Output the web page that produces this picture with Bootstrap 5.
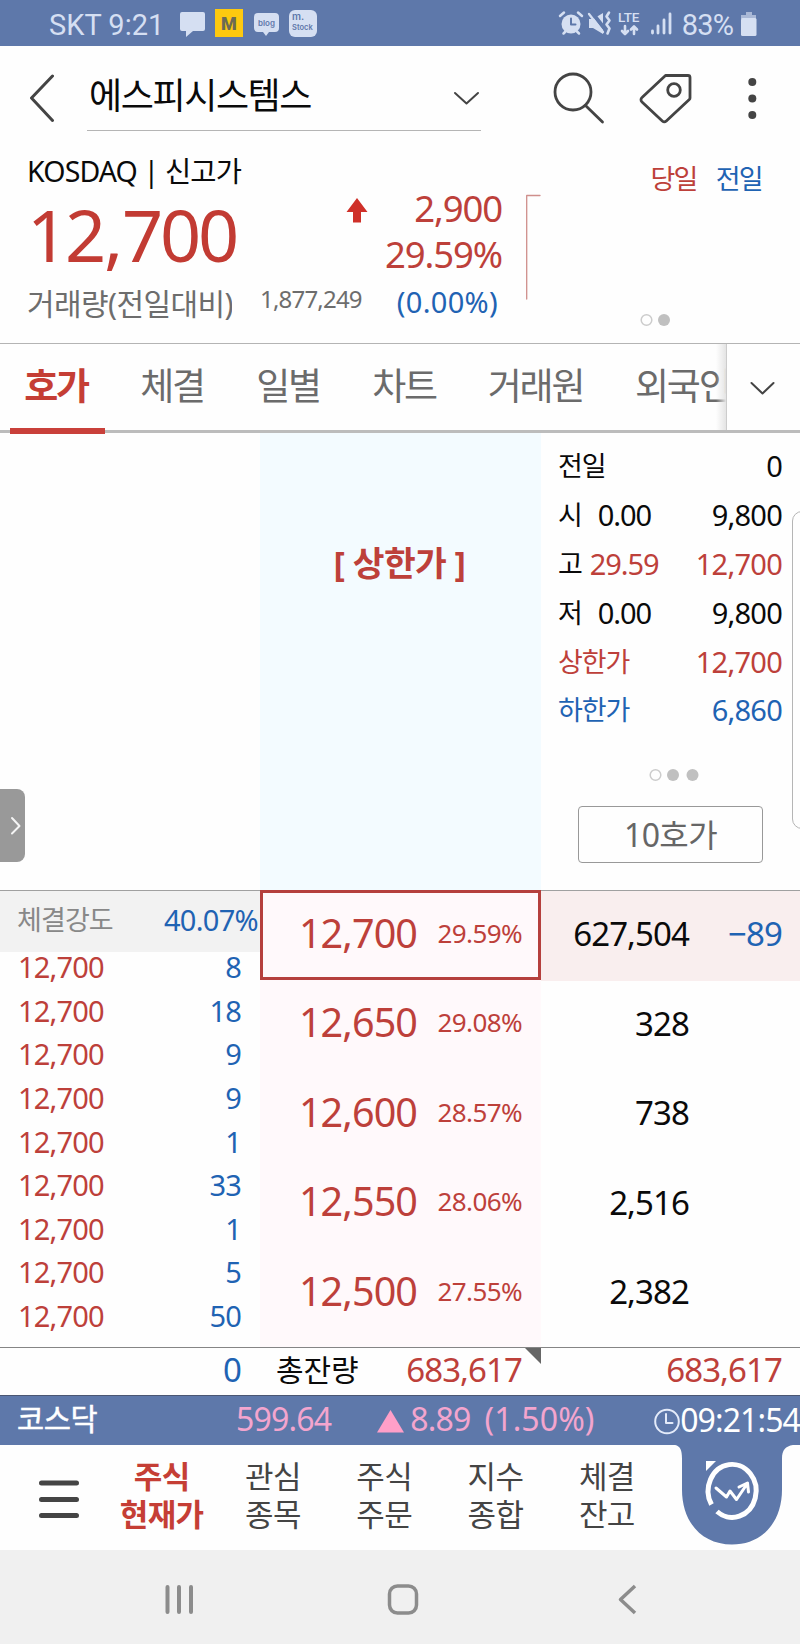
<!DOCTYPE html>
<html lang="ko">
<head>
<meta charset="utf-8">
<meta name="viewport" content="width=device-width, initial-scale=1">
<title>에스피시스템스 호가</title>
<link href="https://cdn.jsdelivr.net/npm/bootstrap@5.3.0/dist/css/bootstrap.min.css" rel="stylesheet">
<style>
:root{--up:#bd403a;--down:#1f63b3;--bar:#5e78aa}
body{font-family:"Noto Sans","Noto Sans CJK KR",sans-serif;color:#0a0a0a;background:#fefefe;width:800px;height:1644px;overflow:hidden;white-space:nowrap;line-height:1}
svg{display:block;flex:none;fill:none;stroke-linecap:round;stroke-linejoin:round}
.up{color:var(--up)}.down{color:var(--down)}
.status{height:46px;background:var(--bar);color:#d5dff2;font-family:Roboto,sans-serif;font-size:29px;line-height:50px}
.head{height:94px}
.pick{width:394px;height:85px;margin-left:33px;border-bottom:1px solid #b5b5b5}
.pick span{font-size:36px;letter-spacing:-1.4px;margin-left:2px;line-height:100px}
.info{height:203px}
.info-l{width:370px;padding-left:27px}
.market{font-size:28.5px;letter-spacing:-.85px;line-height:62px;height:62px}
.price{font-size:72px;letter-spacing:-3.2px;line-height:64px;height:70px}
.price span{padding:0 2px 0 1px}
.vol{height:64px;line-height:64px;color:#6d6d6d}
.vol-n{width:205px;overflow:hidden;font-size:30px;letter-spacing:-.6px}
.vol-v{font-size:24px;letter-spacing:-.8px;margin-left:28px;line-height:54px}
.info-m{width:133px;padding:45px 1px 0 0}
.info-m div{font-size:36.5px;line-height:46px;height:46px;letter-spacing:-1.1px}
.info-m .small-pct{font-size:29px;line-height:49px;letter-spacing:.3px}
.mini{width:15px;height:106px;margin:54px 0 0 23px}
.info-r{width:259px;padding:23px 38px 0 0}
.info-r .lg{font-size:27px;line-height:32px;letter-spacing:-1.7px}
.tabs{height:90px;border-top:1px solid #b4b4b4;border-bottom:3px solid #bcbcbc}
.tabs .t{font-size:37px;letter-spacing:-2.2px;line-height:84px;height:90px;color:#6b6b6b;text-align:center;width:116px;padding-right:4px;flex:none}
.tabs .on{color:#c53e35;font-weight:700;position:relative}
.tabs .on::after{content:"";position:absolute;left:10px;width:95px;bottom:0;height:6px;background:#c9403a}
.strip{width:726px;overflow:hidden;height:90px;position:relative}
.strip::after{content:"";position:absolute;right:0;top:0;width:10px;height:86px;background:linear-gradient(90deg,#fff0,#e4e4e4)}
.more{width:74px;height:86px;border-left:1px solid #ccc;background:#fefefe}
.upper{height:457px;position:relative}
.c1{width:260px}.c2{width:281px}.c3{width:259px}
.c1,.c2,.c3{flex:none}
.limit{background:#f3fbff;font-size:34.5px;font-weight:700;letter-spacing:-.6px;line-height:260px;text-align:center;padding-right:2px}
.stat{padding:9px 18px 0 17px}
.stat .r{height:48.9px;line-height:48.9px;font-size:29px;letter-spacing:-.75px}
.stat .k{font-size:27px;letter-spacing:-1.1px}
.stat .v{width:68px;text-align:left;letter-spacing:-1.1px}
.btn10{width:185px;height:57px;border:1px solid #999;border-radius:4px;font-size:32px;line-height:50px;letter-spacing:-.6px;color:#666;text-align:center;margin:8px 0 0 20px;padding:0}
.handle{position:absolute;left:0;top:356px;width:25px;height:73px;border-radius:0 8px 8px 0;background:#999}
.peek{position:absolute;left:792px;top:78px;width:20px;height:318px;border:1px solid #b5b5b5;border-radius:11px;background:#fefefe}
.book{height:457px;border-top:1px solid #a0a0a0}
.power{height:61px;background:#f2f2f2;padding:0 2px 0 17px;line-height:58px;font-size:29px;letter-spacing:-.7px}
.power .n{font-size:27px;letter-spacing:-.9px;color:#888}
.ticks{margin-top:-6px}
.ticks div{height:43.65px;line-height:41px;padding:0 19px 0 18px;font-size:29px;letter-spacing:-.8px}
.ask{background:#fff9fb}
.ask .r,.qty .r{height:89.6px;line-height:85px}
.ask .r{padding:0 19px 0 0}
.ask .p{font-size:39.5px;letter-spacing:-.9px;margin-right:20.5px}
.ask .q{font-size:26px;letter-spacing:-.6px}
.ask .r:first-child{border:3px solid #b5403d;line-height:81px;height:90px;padding-right:16px;margin-top:-1px}
.qty .r{font-size:33px;letter-spacing:-.9px}
.qty .r:first-child{background:#f9eeee}
.qty .a{width:148px;text-align:right}.qty .b{width:93px;text-align:right}
.sum{height:49px;border-top:1px solid #858585;border-bottom:1px solid #4a5672;line-height:43px;font-size:33px;letter-spacing:-.9px}
.corner{position:absolute;right:0;top:0;width:16px;height:16px;background:#666;clip-path:polygon(0 0,100% 0,100% 100%)}
.index{height:49px;background:var(--bar);color:#f3a5ce;font-size:32px;line-height:45px;letter-spacing:-.8px}
.index .nm{color:#fff;font-size:29.5px;width:218px;padding-left:17px;letter-spacing:-.4px;-webkit-text-stroke:.5px}
.dock{height:105px}
.dock .m{width:111.3px;flex:none;text-align:center;font-size:31px;line-height:37.5px;letter-spacing:-.6px;color:#444;padding-top:13px}
.dock .on{color:#c53e35;font-weight:700}
.sys{height:94px;background:#f0f0f0}
</style>
</head>
<body>
<div class="status d-flex align-items-start">
  <span style="margin-left:49px;letter-spacing:0">SKT 9:21</span>
  <svg width="150" height="46" viewBox="170 0 150 46" style="margin-left:5px">
    <path fill="#d5dff2" d="M183 12h21a2 2 0 0 1 2 2v15a2 2 0 0 1-2 2h-10l-7 6v-6h-4a2 2 0 0 1-2-2V14a2 2 0 0 1 2-2z"/>
    <path fill="#fdc90f" d="M216 9h28v28h-28z"/>
    <text x="230" y="29.500" text-anchor="middle" font-family="Roboto" font-weight="900" font-size="18" fill="#6b6a55">M</text>
    <path fill="#d5dff2" d="M259 13h17a4 4 0 0 1 4 4v11a4 4 0 0 1-4 4h-6l-3 4-3-4h-5a4 4 0 0 1-4-4V17a4 4 0 0 1 4-4z"/>
    <text x="267.500" y="25.500" text-anchor="middle" font-family="Inter" font-weight="600" font-size="8" fill="#5e78aa">blog</text>
    <rect x="290" y="10" width="28" height="27" rx="6" fill="#d5dff2"/>
    <text x="293" y="20" font-family="Inter" font-weight="600" font-size="10" fill="#5e78aa">m.</text>
    <text x="293" y="30" font-family="Inter" font-weight="600" font-size="7.500" fill="#5e78aa">Stock</text>
  </svg>
  <svg width="120" height="46" viewBox="555 0 120 46" class="ms-auto" stroke="#d5dff2">
    <circle cx="571" cy="24" r="9.500" fill="#d5dff2" stroke="none"/>
    <path stroke-width="2.500" d="M560 16l4-3.500M582 16l-4-3.500M563.500 33.500l2-2M579 33.500l-2-2"/>
    <path stroke="#5e78aa" stroke-width="2" d="M571 18.500v6h4.500"/>
    <path fill="#d5dff2" stroke="none" d="M589 19h4l10-6v21l-10-6h-4z"/>
    <path stroke="#5e78aa" stroke-width="4" d="M590 10l14 18"/><path stroke-width="2.300" d="M589 14l14 18"/>
    <path stroke-width="2.600" d="M609 12.500l-2.500 4 3 4-3 4 3 4-2 5"/>
    <text x="618" y="22" font-family="Roboto" font-weight="500" font-size="13.500" fill="#d5dff2" stroke="none">LTE</text>
    <path stroke-width="2.600" d="M625 26v7M622 31l3 3 3-3M634 34v-7M631 29.500l3-3 3 3"/>
    <path stroke-width="2.800" d="M652.500 31v2M658 26v7M664 20v13M670 14v19"/>
  </svg>
  <span style="margin-left:7px;letter-spacing:-.9px">83%</span>
  <svg width="16" height="46" viewBox="0 0 16 46" style="margin:0 43px 0 8px"><path fill="#a9b8d6" d="M5 12h6v3h4v4H0v-4h5z"/><rect y="18" width="15.500" height="18" rx="1.500" fill="#d5dff2"/></svg>
</div>

<div class="head d-flex">
  <svg width="54" height="94" viewBox="0 46 54 94" stroke="#444" stroke-width="3"><path d="M52.500 76L31.500 98l21 22.500"/></svg>
  <div class="pick d-flex"><span>에스피시스템스</span>
    <svg class="ms-auto" width="30" height="84" viewBox="451 46 30 84" stroke="#444" stroke-width="2"><path d="M455 93l11.500 10.500L478 93"/></svg>
  </div>
  <svg width="319" height="94" viewBox="481 46 319 94" stroke="#444" stroke-width="2.800">
    <circle cx="573" cy="92" r="18"/><path d="M585.500 105.500l17 16.500"/>
    <path d="M665.500 75.500h22.500a2 2 0 0 1 2 2v20.500a2 2 0 0 1-.7 1.500l-23 21.500a3 3 0 0 1-4 0L642 102a3 3 0 0 1 0-4.500z"/><circle cx="674" cy="90" r="6.300"/>
    <g fill="#444" stroke="none"><circle cx="752.300" cy="82" r="4"/><circle cx="752.300" cy="98.500" r="4"/><circle cx="752.300" cy="115" r="4"/></g>
  </svg>
</div>

<div class="info d-flex">
  <div class="info-l">
    <div class="market">KOSDAQ | 신고가</div>
    <div class="price up d-flex" style="color:#c23b33">12<span>,</span>700
      <svg class="ms-auto" width="24" height="64" viewBox="346 202 24 64" style="overflow:visible"><path fill="#cf3029" d="M357 198l10.500 14H361v10.500h-8V212h-6.500z"/></svg>
    </div>
    <div class="vol d-flex"><span class="vol-n">거래량(전일대비)</span><span class="vol-v">1,877,249</span></div>
  </div>
  <div class="info-m text-end">
    <div class="up">2,900</div><div class="up">29.59%</div><div class="down small-pct pe-1">(0.00%)</div>
  </div>
  <svg class="mini" viewBox="0 0 15 106" stroke="#cf8f8c" stroke-width="1.300"><path d="M.7 105V1.500H14"/></svg>
  <div class="info-r d-flex flex-column align-items-end">
    <div class="lg d-flex"><span class="up" style="margin-right:19px">당일</span><span class="down">전일</span></div>
    <svg class="mt-auto" width="122" height="46" viewBox="640 297 122 46"><circle cx="646.500" cy="320" r="5.300" stroke="#ccc" stroke-width="1.500"/><circle cx="664" cy="320" r="6" fill="#c0c0c0"/></svg>
  </div>
</div>

<div class="tabs d-flex">
  <div class="strip d-flex">
    <div class="t on">호가</div><div class="t">체결</div><div class="t">일별</div><div class="t">차트</div><div class="t" style="width:147px">거래원</div><div class="t text-start" style="padding-left:24px">외국인</div>
  </div>
  <div class="more"><svg width="73" height="86" viewBox="727 344 73 86" stroke="#444" stroke-width="2"><path d="M751.500 383l11 10.500 11-10.500"/></svg></div>
</div>

<div class="upper d-flex">
  <div class="c1"></div>
  <div class="c2 limit up">[ 상한가 ]</div>
  <div class="c3">
    <div class="stat">
      <div class="r d-flex justify-content-between"><span class="k">전일</span><span>0</span></div>
      <div class="r d-flex"><span class="k">시</span><span class="v" style="margin-left:16px">0.00</span><span class="ms-auto">9,800</span></div>
      <div class="r d-flex"><span class="k">고</span><span class="v up" style="margin-left:8px">29.59</span><span class="ms-auto up">12,700</span></div>
      <div class="r d-flex"><span class="k">저</span><span class="v" style="margin-left:16px">0.00</span><span class="ms-auto">9,800</span></div>
      <div class="r d-flex justify-content-between up"><span class="k">상한가</span><span>12,700</span></div>
      <div class="r d-flex justify-content-between down"><span class="k">하한가</span><span>6,860</span></div>
      <svg width="190" height="63" viewBox="558 735 190 63"><circle cx="655.500" cy="775" r="5.300" stroke="#ccc" stroke-width="1.500"/><circle cx="673" cy="775" r="6" fill="#c0c0c0"/><circle cx="692.500" cy="775" r="6" fill="#c0c0c0"/></svg>
      <button class="btn10 bg-transparent d-block">10호가</button>
    </div>
  </div>
  <div class="handle"><svg width="25" height="73" viewBox="0 789 25 73" stroke="#f4f4f4" stroke-width="2"><path d="M12 818l7.500 8-7.500 7.500"/></svg></div>
  <div class="peek"></div>
</div>

<div class="book d-flex">
  <div class="c1">
    <div class="power d-flex justify-content-between"><span class="n">체결강도</span><span class="down">40.07%</span></div>
    <div class="ticks">
      <div class="d-flex justify-content-between"><span class="up">12,700</span><span class="down">8</span></div>
      <div class="d-flex justify-content-between"><span class="up">12,700</span><span class="down">18</span></div>
      <div class="d-flex justify-content-between"><span class="up">12,700</span><span class="down">9</span></div>
      <div class="d-flex justify-content-between"><span class="up">12,700</span><span class="down">9</span></div>
      <div class="d-flex justify-content-between"><span class="up">12,700</span><span class="down">1</span></div>
      <div class="d-flex justify-content-between"><span class="up">12,700</span><span class="down">33</span></div>
      <div class="d-flex justify-content-between"><span class="up">12,700</span><span class="down">1</span></div>
      <div class="d-flex justify-content-between"><span class="up">12,700</span><span class="down">5</span></div>
      <div class="d-flex justify-content-between"><span class="up">12,700</span><span class="down">50</span></div>
    </div>
  </div>
  <div class="c2 ask up">
    <div class="r d-flex justify-content-end"><span class="p">12,700</span><span class="q">29.59%</span></div>
    <div class="r d-flex justify-content-end"><span class="p">12,650</span><span class="q">29.08%</span></div>
    <div class="r d-flex justify-content-end"><span class="p">12,600</span><span class="q">28.57%</span></div>
    <div class="r d-flex justify-content-end"><span class="p">12,550</span><span class="q">28.06%</span></div>
    <div class="r d-flex justify-content-end"><span class="p">12,500</span><span class="q">27.55%</span></div>
  </div>
  <div class="c3 qty">
    <div class="r d-flex"><span class="a">627,504</span><span class="b down">−89</span></div>
    <div class="r d-flex"><span class="a">328</span></div>
    <div class="r d-flex"><span class="a">738</span></div>
    <div class="r d-flex"><span class="a">2,516</span></div>
    <div class="r d-flex"><span class="a">2,382</span></div>
  </div>
</div>

<div class="sum d-flex">
  <div class="c1 text-end down" style="padding-right:19px">0</div>
  <div class="c2 position-relative d-flex justify-content-between" style="padding:0 19px 0 16px"><span style="font-size:30px;letter-spacing:-.1px">총잔량</span><span class="up">683,617</span><i class="corner"></i></div>
  <div class="c3 text-end up" style="padding-right:18px">683,617</div>
</div>

<div class="index d-flex">
  <span class="nm">코스닥</span>
  <span style="margin-left:18px">599.64</span>
  <svg width="27" height="49" viewBox="377.500 1395 27 49" style="margin-left:46px"><path fill="#ff9fc8" d="M391 1409l13.500 22.500h-27z"/></svg>
  <span style="margin-left:6px">8.89</span><span style="margin-left:14px;letter-spacing:.1px">(1.50%)</span>
  <svg class="ms-auto" width="26" height="49" viewBox="654 1395 26 49" stroke="#e4ebfa" stroke-width="2"><circle cx="667" cy="1420.500" r="11.800"/><path d="M666 1413v9h6.500"/></svg>
  <span class="text-white" style="font-size:32px;letter-spacing:-.9px;line-height:47px">09:21:54</span>
</div>

<div class="dock d-flex">
  <svg width="106" height="105" viewBox="0 1445 106 105" stroke="#444" stroke-width="5"><path d="M41.500 1483h35M41.500 1499.500h35M41.500 1515.500h35"/></svg>
  <div class="m on">주식<br>현재가</div><div class="m">관심<br>종목</div><div class="m">주식<br>주문</div><div class="m">지수<br>종합</div><div class="m">체결<br>잔고</div>
  <svg class="ms-auto" width="130" height="105" viewBox="670 1445 130 105">
    <path fill="#5e78aa" d="M670 1444.500h130c-12 0-18 3-18 14v31c0 33-20 55-50 55s-50-22-50-55v-31c0-11-3-14-12-14z"/>
    <path stroke="#fff" stroke-width="5" stroke-linecap="butt" d="M711.500 1504.500A24 26.500 0 1 1 717 1511.500"/>
    <path fill="#fff" d="M706 1461h10l-10 10z"/>
    <path stroke="#fff" stroke-width="3" d="M716 1488l10.500 9 3.500-6 6.500 8.500 9.500-14M739 1487l8.500-4 1 9"/>
  </svg>
</div>

<div class="sys"><svg width="800" height="94" viewBox="0 1550 800 94" stroke="#8c8c8c" stroke-width="4"><path d="M167.500 1587v25M179 1587v25M191 1587v25"/><rect x="389.500" y="1586" width="27" height="27" rx="8" stroke-width="3.500"/><path stroke-width="3.500" stroke-linecap="butt" d="M635 1586l-14.500 13.500 14.500 13.500"/></svg></div>
<script src="https://cdn.jsdelivr.net/npm/bootstrap@5.3.0/dist/js/bootstrap.bundle.min.js"></script>
</body>
</html>
